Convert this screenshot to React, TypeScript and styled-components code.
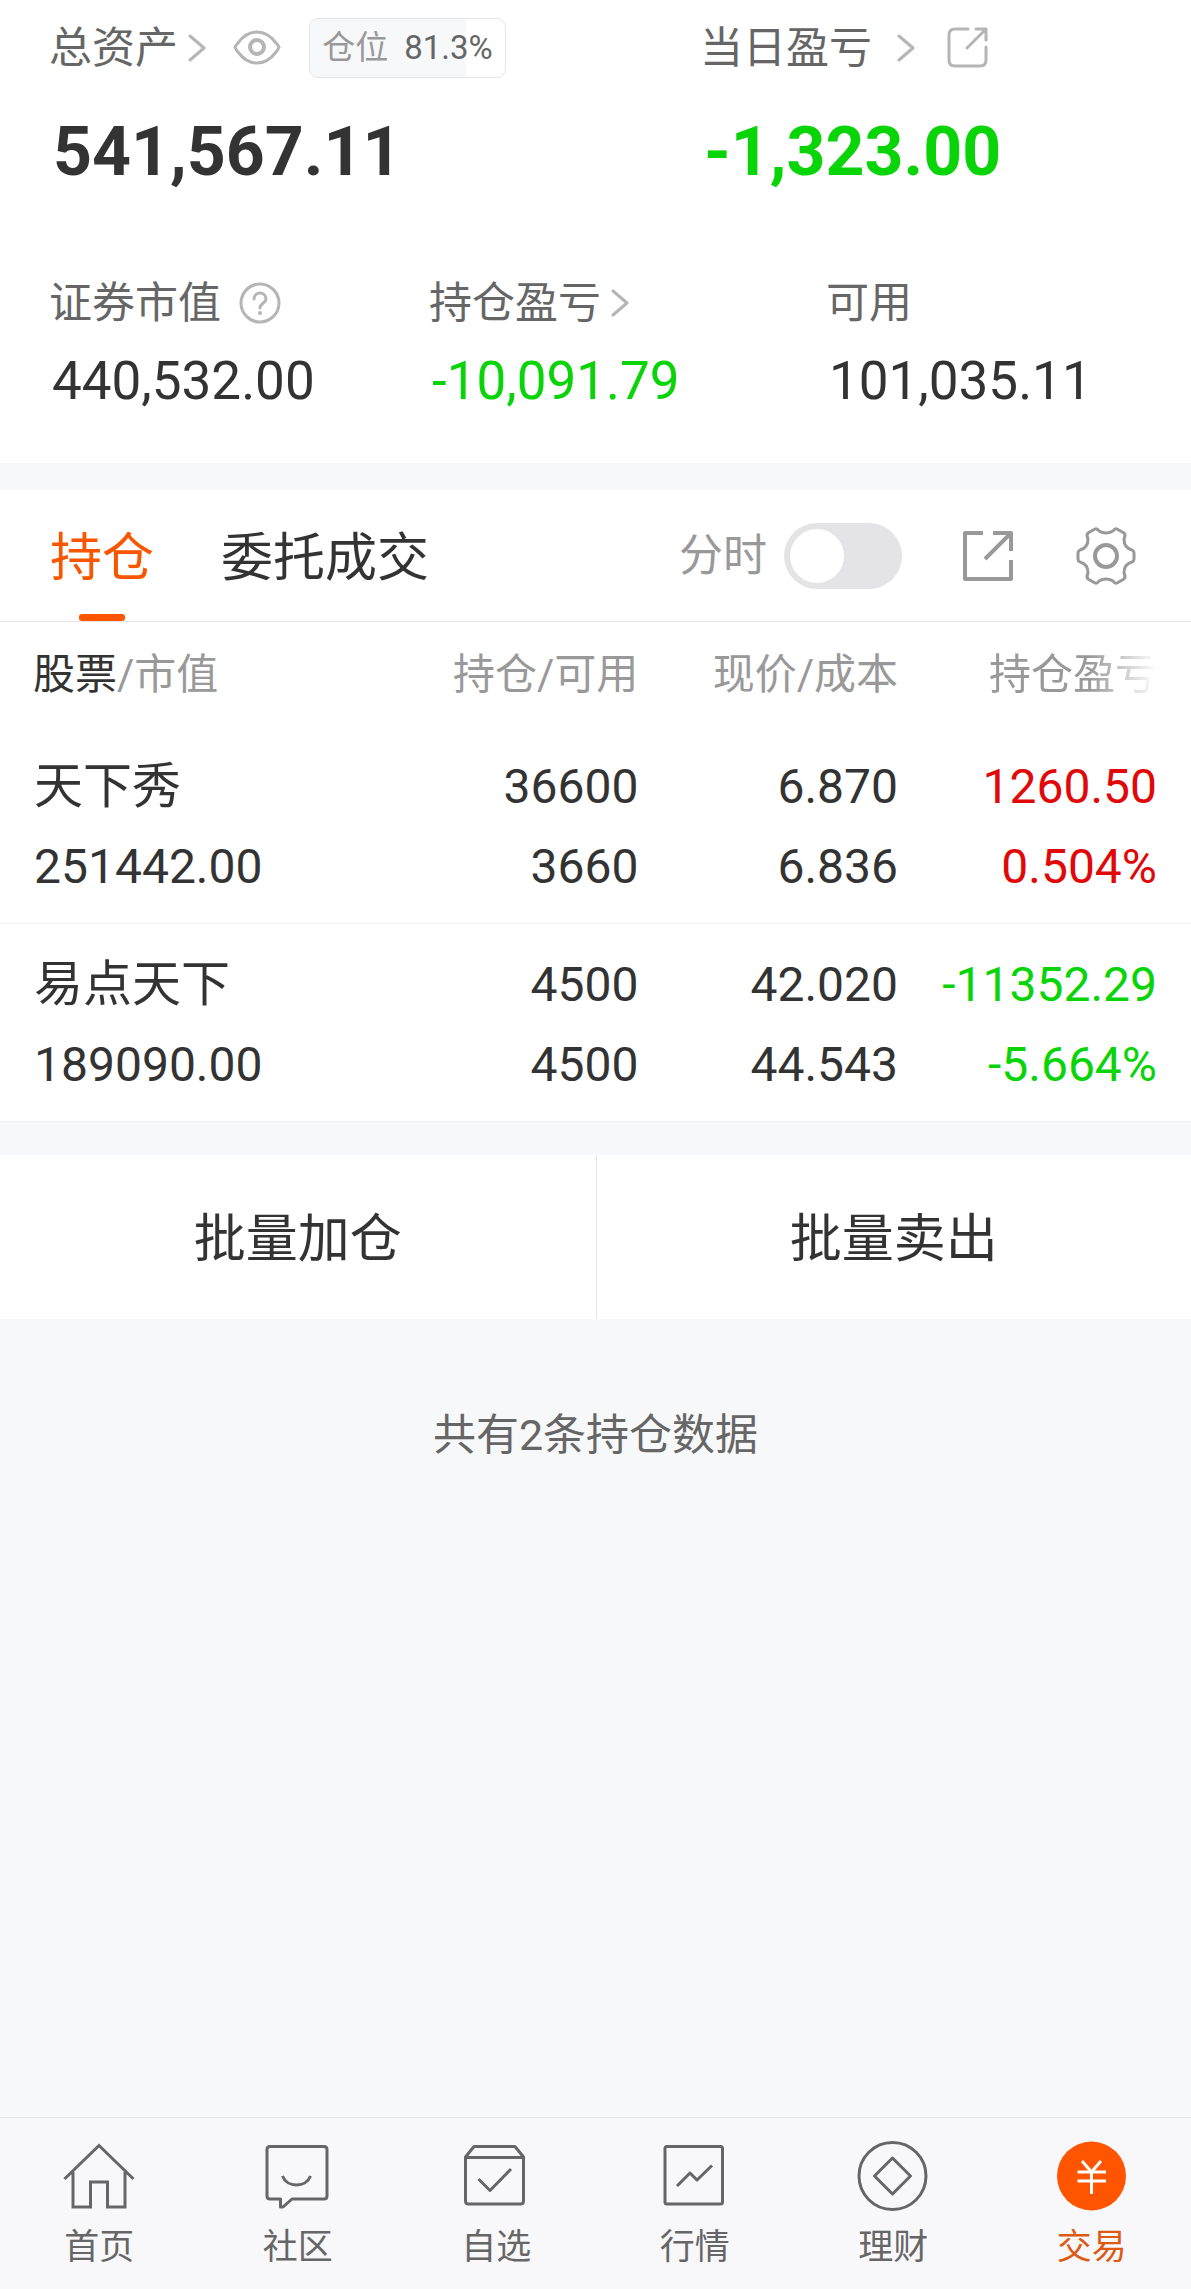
import React, { useState } from "react";
import styled, { createGlobalStyle } from "styled-components";

const color = {
  ink: "#333333",
  label: "#666666",
  muted: "#999999",
  icon: "#b5b5b5",
  line: "#e6e6e8",
  softLine: "#efeff1",
  page: "#f7f8fa",
  surface: "#ffffff",
  brand: "#ff5500",
  brandText: "#dc5a14",
  up: "#e00808",
  down: "#08d408",
};

const GlobalStyle = createGlobalStyle`
  *, *::before, *::after { box-sizing: border-box; }
  body {
    margin: 0;
    background: ${color.page};
    color: ${color.ink};
    font-family: Roboto, "Noto Sans CJK SC", sans-serif;
  }
  a { color: inherit; text-decoration: none; }
  button { font: inherit; color: inherit; background: none; border: 0; padding: 0; cursor: pointer; }
  svg { display: block; flex: none; }
`;

const Page = styled.div`
  min-height: 100vh;
  display: flex;
  flex-direction: column;
`;

const Main = styled.main`
  flex: 1;
`;

/* ---------- account summary ---------- */

const Summary = styled.section`
  background: ${color.surface};
  padding: 18px 49px 52px;
`;

const TotalsGrid = styled.div`
  display: grid;
  grid-template-columns: 651fr 442fr;
`;

const DetailGrid = styled.div`
  display: grid;
  grid-template-columns: 380fr 397fr 316fr;
  margin-top: 81px;
`;

const LabelRow = styled.div`
  display: flex;
  align-items: center;
  height: 60px;
`;

const LabelLink = styled.a<{ $gap: number }>`
  display: flex;
  align-items: center;
  gap: ${(p) => p.$gap}px;
  color: ${color.label};
  font-size: 43px;
  line-height: 60px;
  white-space: nowrap;
`;

const LabelText = styled.span`
  color: ${color.label};
  font-size: 43px;
  line-height: 60px;
  white-space: nowrap;
`;

const IconButton = styled.button<{ $space?: number }>`
  display: flex;
  margin-left: ${(p) => p.$space ?? 0}px;
`;

const PositionBadge = styled.span<{ $fill: number }>`
  display: flex;
  align-items: center;
  justify-content: center;
  gap: 16px;
  width: 197px;
  height: 60px;
  margin-left: 28px;
  border: 1px solid ${color.line};
  border-radius: 9px;
  background: linear-gradient(to right, ${color.page} ${(p) => p.$fill}%, ${color.surface} ${(p) => p.$fill}%);
  color: ${color.label};
  font-size: 33px;
  line-height: 58px;
  white-space: nowrap;
`;

const BadgeCaption = styled.span`
  color: ${color.muted};
`;

type Tone = "plain" | "up" | "down";
const toneColor = (t: Tone) => (t === "up" ? color.up : t === "down" ? color.down : color.ink);

const TotalValue = styled.div<{ $tone: Tone }>`
  margin-top: 34px;
  padding-left: 4px;
  font-size: 68px;
  line-height: 80px;
  font-weight: 700;
  color: ${(p) => toneColor(p.$tone)};
`;

const DetailValue = styled.div<{ $tone: Tone }>`
  margin-top: 18px;
  padding-left: 3px;
  font-size: 53px;
  line-height: 60px;
  color: ${(p) => toneColor(p.$tone)};
`;

/* ---------- holdings ---------- */

const Holdings = styled.section`
  margin-top: 27px;
  background: ${color.surface};
`;

const TabBar = styled.div`
  display: flex;
  align-items: stretch;
  height: 132px;
  padding: 0 55px 0 50px;
  border-bottom: 1px solid ${color.line};
`;

const TabList = styled.div`
  display: flex;
  gap: 67px;
`;

const Tab = styled.button<{ $active: boolean }>`
  position: relative;
  padding-top: 6px;
  font-size: 52px;
  line-height: 125px;
  color: ${(p) => (p.$active ? "#fa5600" : color.ink)};
  white-space: nowrap;

  &::after {
    content: "";
    display: ${(p) => (p.$active ? "block" : "none")};
    position: absolute;
    left: 50%;
    bottom: 0;
    width: 46px;
    height: 7px;
    margin-left: -23px;
    border-radius: 3px;
    background: ${color.brand};
  }
`;

const Tools = styled.div`
  display: flex;
  align-items: center;
  gap: 60px;
  margin-left: auto;
`;

const SwitchLabel = styled.label`
  display: flex;
  align-items: center;
  gap: 17px;
  font-size: 44px;
  line-height: 60px;
  color: ${color.muted};
  white-space: nowrap;
`;

const Switch = styled.input`
  appearance: none;
  display: flex;
  align-items: center;
  width: 118px;
  height: 66px;
  margin: 0;
  padding: 0 6px;
  border-radius: 33px;
  background: #e4e4e6;
  cursor: pointer;

  &::before {
    content: "";
    width: 54px;
    height: 54px;
    border-radius: 50%;
    background: ${color.surface};
  }
  &:checked {
    justify-content: flex-end;
    background: ${color.brand};
  }
`;

const Table = styled.table`
  width: 100%;
  table-layout: fixed;
  border-collapse: collapse;
`;

const HeadCell = styled.th<{ $width: string }>`
  width: ${(p) => p.$width};
  height: 104px;
  padding: 2px 0 0;
  text-align: right;
  font-size: 42px;
  line-height: 60px;
  font-weight: 400;
  color: ${color.muted};
  white-space: nowrap;

  &:first-child { padding-left: 33px; text-align: left; }
  &:last-child { padding-right: 34px; }
`;

const SortedName = styled.span`
  color: ${color.ink};
`;

const FadedHead = styled.span`
  mask-image: linear-gradient(to right, #000 60%, transparent 100%);
`;

const Row = styled.tr`
  border-bottom: 1px solid ${color.softLine};
`;

const Cell = styled.td<{ $tone?: Tone }>`
  padding: 21px 0 16px;
  text-align: right;
  font-size: 48px;
  line-height: 80px;
  color: ${(p) => toneColor(p.$tone ?? "plain")};
  white-space: nowrap;

  &:first-child { padding-left: 34px; text-align: left; }
  &:last-child { padding-right: 34px; }
`;

const Line = styled.div``;

const StockName = styled.div`
  font-size: 49px;
`;

const BatchActions = styled.div`
  display: grid;
  grid-template-columns: 1fr 1fr;
  margin-top: 33px;
  background: ${color.surface};
`;

const BatchButton = styled.button`
  height: 164px;
  padding-top: 6px;
  font-size: 52px;
  line-height: 80px;

  & + & { border-left: 1px solid ${color.line}; }
`;

const CountNote = styled.p`
  margin: 86px 0;
  text-align: center;
  font-size: 43px;
  line-height: 60px;
  color: ${color.label};
`;

/* ---------- bottom navigation ---------- */

const BottomNav = styled.nav`
  display: grid;
  grid-template-columns: repeat(6, 1fr);
  padding: 22px 0 19px;
  border-top: 1px solid ${color.line};
  background: #f8f8fa;
`;

const NavItem = styled.a<{ $active: boolean }>`
  display: flex;
  flex-direction: column;
  align-items: center;
  gap: 14px;
  font-size: 35px;
  line-height: 44px;
  color: ${(p) => (p.$active ? color.brandText : color.label)};
`;

/* ---------- icons ---------- */

const Chevron = () => (
  <svg width="18" height="28" viewBox="0 0 18 28" fill="none" stroke={color.icon} strokeWidth="3" strokeLinecap="round" strokeLinejoin="round">
    <path d="M2 2 16 14 2 26" />
  </svg>
);

const EyeIcon = () => (
  <svg width="48" height="36" viewBox="0 0 48 36" fill="none" stroke={color.icon} strokeWidth="3">
    <path d="M2 17Q3 15 5 13Q13 2 24 2Q35 2 43 13Q45 15 46 17Q45 20 43 22Q35 33 24 33Q13 33 5 22Q3 20 2 17Z" />
    <circle cx="24" cy="17" r="7" strokeWidth="4" />
  </svg>
);

const SmallShareIcon = () => (
  <svg width="42" height="42" viewBox="0 0 42 42" fill="none" stroke={color.icon} strokeWidth="3" strokeLinecap="round" strokeLinejoin="round">
    <path d="M21 2H8Q2 2 2 8V33Q2 39 8 39H33Q39 39 39 33V20M29 2H39V13M38 3 20 21" />
  </svg>
);

const HelpIcon = () => (
  <svg width="42" height="42" viewBox="0 0 42 42" fill="none" stroke={color.icon} strokeWidth="3" strokeLinecap="round">
    <circle cx="21" cy="21" r="19" />
    <path d="M15 17C15 9 27 9 27 17C27 21 21 21 21 26" />
    <circle cx="21" cy="31" r="1" strokeWidth="2" />
  </svg>
);

const ShareIcon = () => (
  <svg width="54" height="54" viewBox="0 0 54 54" fill="none" stroke={color.muted} strokeWidth="4" strokeLinejoin="round">
    <path d="M21 4H3V50H49V31M31 4H49V22M49 4 23 30" />
  </svg>
);

const GearIcon = () => (
  <svg width="60" height="60" viewBox="0 0 60 60" fill="none" stroke={color.muted} strokeWidth="3" strokeLinejoin="round">
    <path d="M2 27Q2 25 4 24Q12 22 12 13Q10 9 12 7L19 3Q21 2 23 5Q30 9 37 5Q39 2 41 3L48 7Q50 9 48 13Q48 22 56 24Q58 25 58 27V33Q58 35 56 36Q48 38 48 47Q50 51 48 53L41 57Q39 58 37 55Q30 51 23 55Q21 58 19 57L12 53Q10 51 12 47Q12 38 4 36Q2 35 2 33Z" />
    <circle cx="30" cy="30" r="11" strokeWidth="4" />
  </svg>
);

const NavSvg = ({ children }: { children: React.ReactNode }) => (
  <svg width="72" height="72" viewBox="0 0 72 72" fill="none" stroke={color.label} strokeWidth="3" strokeLinejoin="round" aria-hidden="true">
    {children}
  </svg>
);

const navItems = [
  { name: "首页", icon: <path d="M1.500 39 36 5.500 70.500 39M10 32V67H27.500V42H44.500V67H62V32" strokeLinejoin="miter" /> },
  {
    name: "社区",
    icon: (
      <>
        <path d="M8 6.500H62Q65 6.500 65 9.500V56Q65 59 62 59H30L21 67H18.500V59H8Q5 59 5 56V9.500Q5 6.500 8 6.500Z" />
        <path d="M20.500 36C25 48 44 48 48.500 36" />
      </>
    ),
  },
  {
    name: "自选",
    icon: <path d="M14 6.500H55L63.500 17V61Q63.500 64 60.500 64H8.500Q5.500 64 5.500 61V17ZM5.500 17.500H63.500M18.500 39 30 50.500 51 29" />,
  },
  {
    name: "行情",
    icon: (
      <>
        <rect x="6" y="6.500" width="57.500" height="57.500" rx="2" />
        <path d="M18 46 31 33 38 40 53 25.500" />
      </>
    ),
  },
  {
    name: "理财",
    icon: (
      <>
        <circle cx="35.500" cy="36" r="33.500" />
        <path d="M35.500 18 53.500 36 35.500 54 17.500 36Z" />
      </>
    ),
  },
  {
    name: "交易",
    icon: (
      <>
        <circle cx="35.500" cy="36" r="34.500" fill={color.brand} stroke="none" />
        <path d="M26 21 35.500 32 45 21M21.500 32H50M21.500 41H50M35.500 32V54" stroke="#fff" />
      </>
    ),
  },
];

/* ---------- data ---------- */

const positions: { name: string; value: string; held: string; usable: string; price: string; cost: string; gain: string; rate: string; tone: Tone }[] = [
  { name: "天下秀", value: "251442.00", held: "36600", usable: "3660", price: "6.870", cost: "6.836", gain: "1260.50", rate: "0.504%", tone: "up" },
  { name: "易点天下", value: "189090.00", held: "4500", usable: "4500", price: "42.020", cost: "44.543", gain: "-11352.29", rate: "-5.664%", tone: "down" },
];

const tabs = ["持仓", "委托成交"];

export default function App() {
  const [tab, setTab] = useState(tabs[0]);
  const [intraday, setIntraday] = useState(false);

  return (
    <Page>
      <GlobalStyle />
      <Main>
        <Summary>
          <TotalsGrid>
            <div>
              <LabelRow>
                <LabelLink href="#assets" $gap={10}>总资产<Chevron /></LabelLink>
                <IconButton type="button" aria-label="隐藏金额" $space={27}><EyeIcon /></IconButton>
                <PositionBadge $fill={80}>
                  <BadgeCaption>仓位</BadgeCaption>
                  <span>81.3%</span>
                </PositionBadge>
              </LabelRow>
              <TotalValue $tone="plain">541,567.11</TotalValue>
            </div>
            <div>
              <LabelRow>
                <LabelLink href="#today" $gap={25}>当日盈亏<Chevron /></LabelLink>
                <IconButton type="button" aria-label="分享" $space={32}><SmallShareIcon /></IconButton>
              </LabelRow>
              <TotalValue $tone="down">-1,323.00</TotalValue>
            </div>
          </TotalsGrid>
          <DetailGrid>
            <div>
              <LabelRow>
                <LabelText>证券市值</LabelText>
                <IconButton type="button" aria-label="说明" $space={18}><HelpIcon /></IconButton>
              </LabelRow>
              <DetailValue $tone="plain">440,532.00</DetailValue>
            </div>
            <div>
              <LabelRow>
                <LabelLink href="#gain" $gap={10}>持仓盈亏<Chevron /></LabelLink>
              </LabelRow>
              <DetailValue $tone="down">-10,091.79</DetailValue>
            </div>
            <div>
              <LabelRow>
                <LabelText>可用</LabelText>
              </LabelRow>
              <DetailValue $tone="plain">101,035.11</DetailValue>
            </div>
          </DetailGrid>
        </Summary>

        <Holdings>
          <TabBar>
            <TabList role="tablist">
              {tabs.map((t) => (
                <Tab key={t} type="button" role="tab" aria-selected={t === tab} $active={t === tab} onClick={() => setTab(t)}>
                  {t}
                </Tab>
              ))}
            </TabList>
            <Tools>
              <SwitchLabel htmlFor="intraday">
                分时
                <Switch id="intraday" type="checkbox" role="switch" checked={intraday} onChange={(e) => setIntraday(e.target.checked)} />
              </SwitchLabel>
              <IconButton type="button" aria-label="导出"><ShareIcon /></IconButton>
              <IconButton type="button" aria-label="设置"><GearIcon /></IconButton>
            </Tools>
          </TabBar>
          <Table>
            <thead>
              <tr>
                <HeadCell scope="col" $width="32%"><SortedName>股票</SortedName>/市值</HeadCell>
                <HeadCell scope="col" $width="21.6%">持仓/可用</HeadCell>
                <HeadCell scope="col" $width="21.8%">现价/成本</HeadCell>
                <HeadCell scope="col" $width="24.6%"><FadedHead>持仓盈亏</FadedHead></HeadCell>
              </tr>
            </thead>
            <tbody>
              {positions.map((p) => (
                <Row key={p.name}>
                  <Cell><StockName>{p.name}</StockName><Line>{p.value}</Line></Cell>
                  <Cell><Line>{p.held}</Line><Line>{p.usable}</Line></Cell>
                  <Cell><Line>{p.price}</Line><Line>{p.cost}</Line></Cell>
                  <Cell $tone={p.tone}><Line>{p.gain}</Line><Line>{p.rate}</Line></Cell>
                </Row>
              ))}
            </tbody>
          </Table>
        </Holdings>

        <BatchActions>
          <BatchButton type="button">批量加仓</BatchButton>
          <BatchButton type="button">批量卖出</BatchButton>
        </BatchActions>
        <CountNote>共有2条持仓数据</CountNote>
      </Main>

      <BottomNav>
        {navItems.map((n) => (
          <NavItem key={n.name} href={`#${n.name}`} $active={n.name === "交易"}>
            <NavSvg>{n.icon}</NavSvg>
            {n.name}
          </NavItem>
        ))}
      </BottomNav>
    </Page>
  );
}
